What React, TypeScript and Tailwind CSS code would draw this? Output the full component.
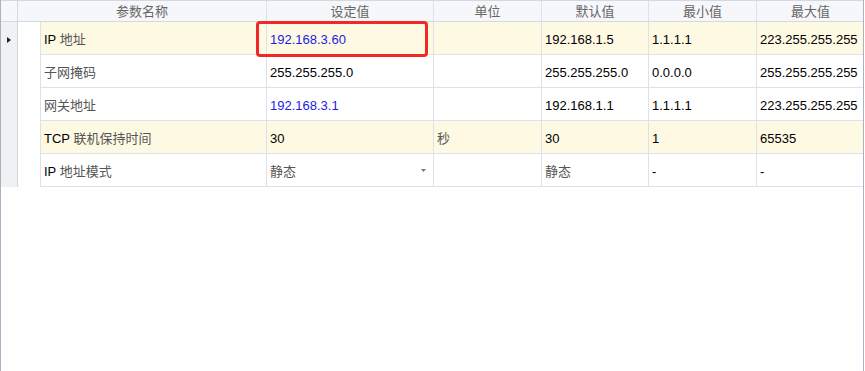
import React from "react";

type Row = {
  name: React.ReactNode;
  value: string;
  blue?: boolean;
  unit?: string;
  def: React.ReactNode;
  min: string;
  max: string;
  hl?: boolean;
  select?: boolean;
  current?: boolean;
};

const Cjk = ({ children }: { children: React.ReactNode }) => (
  <span className="text-[#555]">{children}</span>
);

const rows: Row[] = [
  { name: <>IP <Cjk>地址</Cjk></>, value: "192.168.3.60", blue: true, def: "192.168.1.5", min: "1.1.1.1", max: "223.255.255.255", hl: true, current: true },
  { name: <Cjk>子网掩码</Cjk>, value: "255.255.255.0", def: "255.255.255.0", min: "0.0.0.0", max: "255.255.255.255" },
  { name: <Cjk>网关地址</Cjk>, value: "192.168.3.1", blue: true, def: "192.168.1.1", min: "1.1.1.1", max: "223.255.255.255" },
  { name: <>TCP <Cjk>联机保持时间</Cjk></>, value: "30", unit: "秒", def: "30", min: "1", max: "65535", hl: true },
  { name: <>IP <Cjk>地址模式</Cjk></>, value: "静态", def: <Cjk>静态</Cjk>, min: "-", max: "-", select: true },
];

const headers = [
  { label: "设定值", w: "w-[167px]" },
  { label: "单位", w: "w-[108px]" },
  { label: "默认值", w: "w-[107px]" },
  { label: "最小值", w: "w-[108px]" },
  { label: "最大值", w: "w-[107px]" },
];

export default function App() {
  return (
    <div
      className="relative w-[864px] h-[371px] bg-white border-l border-r border-[#a9b2c2] overflow-hidden text-[13px] text-[#000]"
      style={{ fontFamily: "'Liberation Sans', 'Noto Sans CJK SC', sans-serif" }}
    >
      {/* Header */}
      <div className="flex h-[22px] bg-[#f6f7fa] border-t border-b border-[#d3d8e2] text-[#666]">
        <div className="w-[17px] shrink-0 border-r border-[#d3d8e2]" />
        <div className="w-[249px] shrink-0 flex items-center justify-center pt-[2px] border-r border-[#dde1e9]">参数名称</div>
        {headers.map((h, i) => (
          <div
            key={h.label}
            className={`${h.w} shrink-0 flex items-center justify-center pt-[2px] ${i < headers.length - 1 ? "border-r border-[#dde1e9]" : ""}`}
          >
            {h.label}
          </div>
        ))}
      </div>

      {/* Body */}
      <div className="flex">
        <div className="w-[17px] shrink-0 bg-[#eff1f5] border-r border-[#d3d8e2] flex flex-col">
          {rows.map((r, i) => (
            <div key={i} className="h-[33px] flex items-center justify-center pt-[2px]">
              {r.current && (
                <svg width="4" height="6" viewBox="0 0 4 6">
                  <path d="M0 0 L4 3 L0 6 Z" fill="#222" />
                </svg>
              )}
            </div>
          ))}
        </div>
        <div className="w-[22px] shrink-0" />
        <div className="flex flex-col border-l border-[#dde1e9]">
          {rows.map((r, i) => (
            <div
              key={i}
              className={`flex h-[33px] border-b border-[#dde1e9] ${r.hl ? "bg-[#fef9e2]" : "bg-white"}`}
            >
              <div className="w-[226px] shrink-0 flex items-center pl-[3px] pt-[3px] border-r border-[#dde1e9]">
                <span className="whitespace-pre">{r.name}</span>
              </div>
              <div className="w-[167px] shrink-0 flex items-center justify-between pl-[3px] pr-[7px] pt-[3px] border-r border-[#dde1e9]">
                <span className={r.blue ? "text-[#1c1ce6]" : r.select ? "text-[#555]" : ""}>{r.value}</span>
                {r.select && (
                  <svg width="5" height="3" viewBox="0 0 5 3" className="mt-[-2px]">
                    <path d="M0 0 H5 L2.5 3 Z" fill="#6b7894" />
                  </svg>
                )}
              </div>
              <div className="w-[108px] shrink-0 flex items-center pl-[3px] pt-[3px] border-r border-[#dde1e9] text-[#555]">{r.unit}</div>
              <div className="w-[107px] shrink-0 flex items-center pl-[3px] pt-[3px] border-r border-[#dde1e9]">{r.def}</div>
              <div className="w-[108px] shrink-0 flex items-center pl-[3px] pt-[3px] border-r border-[#dde1e9]">{r.min}</div>
              <div className="w-[106px] shrink-0 flex items-center pl-[3px] pt-[3px]">{r.max}</div>
            </div>
          ))}
        </div>
      </div>

      {/* Highlight box */}
      <div className="absolute left-[255px] top-[21px] w-[172px] h-[36px] border-[3px] border-[#f02828] rounded-[4px]" />
    </div>
  );
}
